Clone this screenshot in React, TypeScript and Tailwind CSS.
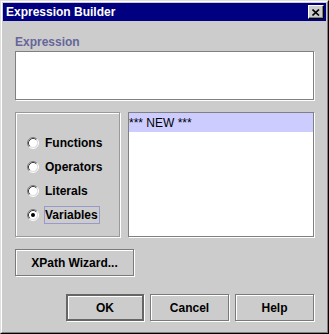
import React from "react";

function Radio({ checked }: { checked?: boolean }) {
  const o = 3.89;
  const i = 3.18;
  return (
    <svg width="12" height="12" viewBox="0 0 12 12" className="shrink-0">
      <circle cx="6" cy="6" r="4.5" fill="#ffffff" />
      <path d={`M${6 - o} ${6 + o} A5.5 5.5 0 0 1 ${6 + o} ${6 - o}`} stroke="#808080" strokeWidth="1" fill="none" />
      <path d={`M${6 + o} ${6 - o} A5.5 5.5 0 0 1 ${6 - o} ${6 + o}`} stroke="#ffffff" strokeWidth="1" fill="none" />
      <path d={`M${6 - i} ${6 + i} A4.5 4.5 0 0 1 ${6 + i} ${6 - i}`} stroke="#404040" strokeWidth="1" fill="none" />
      <path d={`M${6 + i} ${6 - i} A4.5 4.5 0 0 1 ${6 - i} ${6 + i}`} stroke="#dfdfdf" strokeWidth="1" fill="none" />
      {checked && <circle cx="6" cy="6" r="2" fill="#000000" />}
    </svg>
  );
}

function RadioRow({ label, checked, focused }: { label: string; checked?: boolean; focused?: boolean }) {
  return (
    <div className="h-[24px] flex items-center">
      <Radio checked={checked} />
      <span
        className={
          "ml-[5px] h-[18px] flex items-center pr-[1px] border " +
          (focused ? "border-[#9999cc]" : "border-transparent")
        }
      >
        {label}
      </span>
    </div>
  );
}

function Btn({ label, w, isDefault }: { label: string; w: string; isDefault?: boolean }) {
  return (
    <div
      className={
        "h-[27px] flex items-center justify-center bg-[#cccccc] shadow-[inset_1px_1px_0_#ffffff,1px_1px_0_#ffffff] " +
        w +
        (isDefault ? " border-2 border-[#666666]" : " border border-[#7a7a7a]")
      }
    >
      {label}
    </div>
  );
}

export default function App() {
  return (
    <div className="w-[329px] h-[334px] border border-t-[#dfdfdf] border-l-[#dfdfdf] border-r-black border-b-black font-['Liberation_Sans',Arial,sans-serif] text-[12px] font-bold text-black">
      <div className="h-full border border-t-white border-l-white border-r-[#808080] border-b-[#808080] bg-[#cccccc] p-px flex flex-col">
        <div className="h-[18px] bg-[#000080] flex items-center justify-between pl-[3px] pr-[2px] text-white">
          <span className="leading-[14px]">Expression Builder</span>
          <div className="w-[16px] h-[14px] bg-[#cccccc] border border-t-white border-l-white border-r-black border-b-black shadow-[inset_-1px_-1px_0_#808080] flex items-center justify-center">
            <svg width="8" height="7" viewBox="0 0 8 7">
              <path d="M0.5 0.5 L7 6.5 M7 0.5 L0.5 6.5" stroke="#000" strokeWidth="1.6" fill="none" />
            </svg>
          </div>
        </div>
        <div className="flex-1 px-[12px] pt-[14px] flex flex-col">
          <div className="h-[14px] leading-[14px] text-[#666699]">Expression</div>
          <div className="mt-[2px] w-[299px] h-[49px] bg-white border border-[#808080] shadow-[1px_1px_0_#ffffff]" />
          <div className="mt-[12px] flex">
            <div className="w-[105px] h-[125px] border border-[#999999] shadow-[inset_1px_1px_0_#ffffff,1px_1px_0_#ffffff] pt-[18px] pl-[11px] flex flex-col">
              <RadioRow label="Functions" />
              <RadioRow label="Operators" />
              <RadioRow label="Literals" />
              <RadioRow label="Variables" checked focused />
            </div>
            <div className="ml-[8px] w-[186px] h-[125px] bg-white border border-[#808080] shadow-[1px_1px_0_#ffffff]">
              <div className="h-[19px] bg-[#ccccff] flex items-center font-normal pl-[0px]">*** NEW ***</div>
            </div>
          </div>
          <div className="mt-[12px] flex">
            <Btn label="XPath Wizard..." w="w-[119px]" />
          </div>
          <div className="mt-[18px] flex justify-end gap-[6px]">
            <Btn label="OK" w="w-[78px]" isDefault />
            <Btn label="Cancel" w="w-[79px]" />
            <Btn label="Help" w="w-[79px]" />
          </div>
        </div>
      </div>
    </div>
  );
}
